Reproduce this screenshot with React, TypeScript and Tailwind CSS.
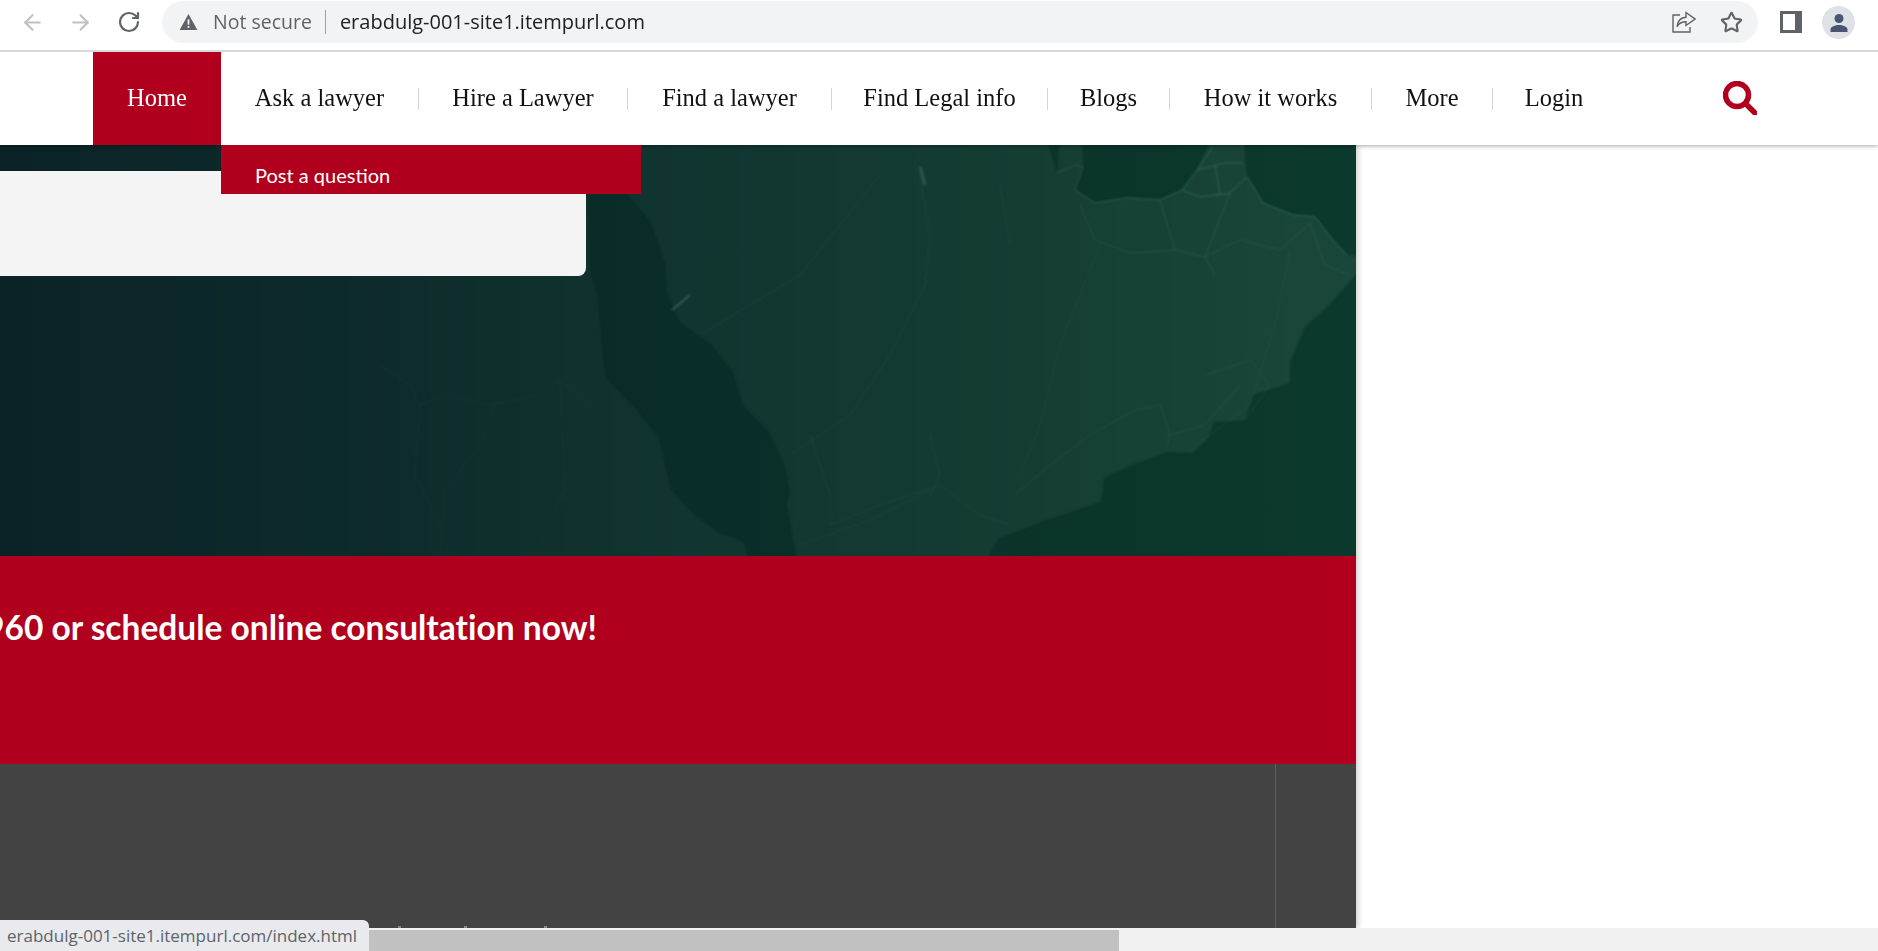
import React from "react";
import { ArrowLeft, ArrowRight, RotateCw, Star } from "lucide-react";

const navItems = [
  { label: "Ask a lawyer", width: "w-[197px]" },
  { label: "Hire a Lawyer", width: "w-[208px]" },
  { label: "Find a lawyer", width: "w-[203px]" },
  { label: "Find Legal info", width: "w-[215px]" },
  { label: "Blogs", width: "w-[121px]" },
  { label: "How it works", width: "w-[201px]" },
  { label: "More", width: "w-[120px]" },
  { label: "Login", width: "w-[122px]" },
];

const BrowserBar: React.FC = () => {
  return (
    <div className="relative z-30 flex h-[52px] shrink-0 items-start border-b-2 border-[#d9d9d9] bg-white">
      <div className="flex h-[44px] items-center pl-[20px]">
        <ArrowLeft className="h-[25px] w-[25px] text-[#bdc1c6]" strokeWidth={2} />
        <ArrowRight className="ml-[23px] h-[25px] w-[25px] text-[#bdc1c6]" strokeWidth={2} />
        <RotateCw className="ml-[24px] h-[24px] w-[24px] text-[#5f6368]" strokeWidth={2.2} />
      </div>

      {/* address pill */}
      <div className="ml-[21px] mt-[1px] flex h-[42px] w-[1596px] items-center rounded-full bg-[#f1f3f4] pl-[17px] pr-[15px] font-['Open_Sans',sans-serif]">
        <svg viewBox="0 0 20 18" className="h-[16px] w-[19px] text-[#5f6368]">
          <path d="M10 0 20 18H0Z" fill="currentColor" />
          <rect x="9" y="6" width="2" height="6" fill="#f1f3f4" />
          <rect x="9" y="13.5" width="2" height="2" fill="#f1f3f4" />
        </svg>
        <span className="ml-[15px] text-[19.500px] text-[#5f6368]">Not secure</span>
        <span className="ml-[13px] h-[24px] w-px bg-[#9aa0a6]" />
        <span className="ml-[14px] text-[20px] text-[#202124]">erabdulg-001-site1.itempurl.com</span>
        <div className="ml-auto flex items-center gap-[24px]">
          <svg viewBox="0 0 24 22" className="h-[22px] w-[24px] text-[#5f6368]" fill="none" stroke="currentColor" strokeWidth="1.4">
            <path d="M8 4H1v17h17v-5" />
            <path d="M14 1.5 23 8l-9 6.500v-3.800c-4 0-7 1.300-9 5 .6-5.500 3.800-9 9-9.400Z" />
          </svg>
          <Star className="h-[23px] w-[23px] text-[#5f6368]" strokeWidth={2.2} />
        </div>
      </div>

      <svg viewBox="0 0 22 22" className="ml-[22px] mt-[11px] h-[22px] w-[22px] text-[#5f6368]">
        <path fillRule="evenodd" d="M0 0h22v22H0ZM3 3v16h12V3Z" fill="currentColor" />
      </svg>

      <div className="ml-[20px] mt-[6px] flex h-[33px] w-[33px] items-center justify-center rounded-full bg-[#dee1e6]">
        <svg viewBox="0 0 20 20" className="h-[20px] w-[20px] text-[#4a5670]">
          <circle cx="10" cy="5.500" r="4.500" fill="currentColor" />
          <path d="M1.500 19v-2.500c0-3 5-4.500 8.500-4.500s8.500 1.500 8.500 4.500V19Z" fill="currentColor" />
        </svg>
      </div>
    </div>
  );
};

const NavBar: React.FC = () => {
  return (
    <nav className="relative z-20 flex h-[93px] shrink-0 items-center bg-white pl-[93px] font-['Liberation_Serif',serif] text-[24.500px] text-[#111] shadow-[0_1px_4px_rgba(0,0,0,0.35)]">
      <a className="flex h-full w-[128px] items-center justify-center bg-[#b0001e] text-white">Home</a>
      {navItems.map((item, i) => (
        <React.Fragment key={item.label}>
          <a className={`${item.width} text-center`}>{item.label}</a>
          {i < navItems.length - 1 && <span className="h-[22px] w-px bg-[#d5d5d5]" />}
        </React.Fragment>
      ))}
      <svg viewBox="0 0 34 34" className="mb-[2px] ml-[108px] h-[34px] w-[34px] text-[#b0001e]" fill="none" stroke="currentColor">
        <circle cx="14" cy="14" r="11.500" strokeWidth="5.500" />
        <path d="M23 23 32 32" strokeWidth="5.500" strokeLinecap="round" />
      </svg>
      {/* open dropdown */}
      <div className="absolute left-[221px] top-[93px] flex h-[49px] w-[420px] items-end bg-[#b0001e] pb-[4px] pl-[34px] font-['Lato',sans-serif] text-[20px] text-white">
        Post a question
      </div>
    </nav>
  );
};

const HeroMap: React.FC = () => {
  return (
    <svg viewBox="0 0 1356 411" className="absolute inset-0 h-full w-full">
      <defs>
        <linearGradient id="sea" gradientUnits="userSpaceOnUse" x1="0" y1="0" x2="1356" y2="0">
          <stop offset="0" stopColor="#0b2226" />
          <stop offset="0.45" stopColor="#092c28" />
          <stop offset="1" stopColor="#0c392d" />
        </linearGradient>
        <linearGradient id="land" gradientUnits="userSpaceOnUse" x1="0" y1="0" x2="1356" y2="0">
          <stop offset="0" stopColor="#0b2327" />
          <stop offset="0.3" stopColor="#0e2c2b" />
          <stop offset="0.5" stopColor="#113530" />
          <stop offset="0.75" stopColor="#153d34" />
          <stop offset="1" stopColor="#1b473b" />
        </linearGradient>
        <filter id="soft" x="-2%" y="-2%" width="104%" height="104%" colorInterpolationFilters="sRGB">
          <feGaussianBlur stdDeviation="1" />
        </filter>
      </defs>
      <rect width="1356" height="411" fill="url(#sea)" />
      <g filter="url(#soft)">
        {/* west shore */}
        <path d="M-10-10H586L590 125 597 150 605 232 620 248 638 267 659 293 670 343 691 367 717 387 743 397 751 421H-10Z" fill="url(#land)" />
        {/* central land */}
        <path
          d="M600-10 628 50 651 77 665 117 667 147 680 177 712 200 733 227 743 260 769 287 785 320 790 347 787 360 798 421H982L999 393 1041 377 1101 357 1104 333 1125 323 1167 307 1193 308 1208 293 1214 277 1245 275 1253 250 1290 238 1290 217 1305 182 1329 160 1366 118V112L1347 110 1333 95 1315 72 1293 70 1263 58 1247 32 1243-10H1213L1197 25 1182 45 1160 55 1127 53 1095 58 1075 45 1083 22 1082-10H1060L1057 28 1045-10Z"
          fill="url(#land)"
        />
        <path d="M1340-10H1366V8Z" fill="#1c483c" />
      </g>
      {/* coast highlights and roads */}
      <g fill="none" stroke="#3f7466" strokeWidth="1" filter="url(#soft)">
        <path opacity="0.7" d="M1075 45 1095 58 1127 53 1160 55 1182 45 1197 25 1213 2" />
        <path opacity="0.8" d="M1247 32 1263 58 1293 70 1315 72 1333 95 1347 110" />
        <path opacity="0.7" d="M1182 45 1200 52 1230 48 1247 32M1197 25 1225 18 1243 18M1220 50 1215 20" />
        <path opacity="0.5" d="M1057 28 1075 20 1083 22M1075 45 1083 22" />
        <path opacity="0.4" d="M1080 60 1095 95 1130 108 1175 105 1205 112 1215 130M1160 55 1175 105M1230 48 1205 112 1240 95 1280 105 1310 78 1325 120 1350 130" />
        <path opacity="0.25" d="M1290 105 1275 180 1250 260 1190 305M1205 230 1250 215 1270 240 1245 275" />
        <path opacity="0.3" d="M1240 240 1205 280 1170 290 1165 305M1170 290 1160 260 1135 265 1090 290 1050 320 1015 350" />
        <path opacity="0.22" d="M920 30 930 90 925 140 890 210 850 270 820 290 790 310M880 30 800 130 700 190" />
        <path opacity="0.16" d="M1000 40 1010 100M1100 100 1060 200 1040 280 1020 330" />
        <path opacity="0.2" d="M810 290 830 350 830 380 880 360 940 340 980 370 1010 380M930 290 940 330 930 350M800 400 870 375 930 345" />
        <path opacity="0.7" d="M672 165 690 150" strokeWidth="2" />
        <path opacity="0.5" d="M920 22 925 40" strokeWidth="3" />
      </g>
      <g fill="none" stroke="#28564a" strokeWidth="1" opacity="0.2" filter="url(#soft)">
        <path d="M380 220 410 240 420 260 445 250 490 260 540 250 560 235 590 260M420 260 415 330 440 380 450 411M495 260 480 300 445 345 440 411M560 235 565 345 540 400" />
      </g>
    </svg>
  );
};

const App: React.FC = () => {
  return (
    <div className="relative flex h-screen w-full flex-col overflow-hidden bg-white">
      <BrowserBar />
      <NavBar />

      <main className="flex w-[1356px] flex-1 flex-col shadow-[2px_0_6px_rgba(0,0,0,0.2)]">
        <section className="relative h-[411px] shrink-0">
          <HeroMap />
          <div className="relative top-[26px] h-[105px] w-[586px] rounded-br-[8px] bg-[#f4f4f4]" />
        </section>

        <section className="flex h-[208px] shrink-0 items-start justify-end overflow-hidden bg-[#b0001e] pr-[759px] pt-[46px]">
          <h2 className="whitespace-nowrap font-['Lato',sans-serif] text-[33.500px] font-bold text-white [font-variant-ligatures:none]">
            Call 1800 960 or schedule online consultation now!
          </h2>
        </section>

        <section className="relative flex flex-1 justify-end bg-[#434343]">
          <div className="mr-[80px] w-px bg-[#5e5e5e]" />
          <span className="absolute bottom-0 left-[398px] h-[2px] w-[3px] bg-[#8a8a8a]" />
          <span className="absolute bottom-0 left-[464px] h-[2px] w-[3px] bg-[#8a8a8a]" />
          <span className="absolute bottom-0 left-[544px] h-[2px] w-[3px] bg-[#8a8a8a]" />
        </section>
      </main>

      {/* horizontal scrollbar */}
      <div className="h-[23px] shrink-0 bg-[#f1f1f1] pt-[2px]">
        <div className="h-full w-[1119px] bg-[#c1c1c1]" />
      </div>

      {/* link preview bubble */}
      <div className="absolute bottom-0 left-0 flex h-[31px] w-[369px] items-center rounded-tr-[6px] bg-[#e8eaed] pl-[7px] font-['Open_Sans',sans-serif] text-[17px] text-[#5f6368]">
        erabdulg-001-site1.itempurl.com/index.html
      </div>
    </div>
  );
};

export default App;
